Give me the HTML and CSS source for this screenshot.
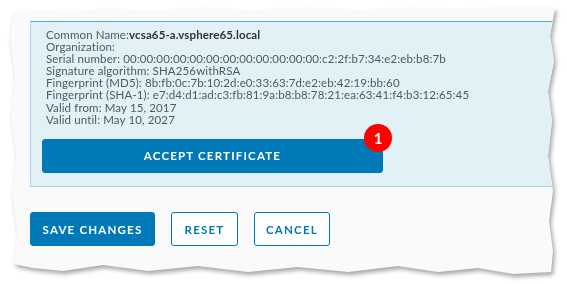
FILE: index.html
```html
<!DOCTYPE html>
<html lang="en">
<head>
  <meta charset="UTF-8">
  <title>Certificate</title>
  <link rel="stylesheet" href="styles.css">
</head>
<body>

<!-- Torn paper snippet -->
<div class="sheet">
  <div class="paper">

    <!-- Certificate info box -->
    <div class="cert-box">
      <div class="cert-info">
        <div>Common Name:<b>vcsa65-a.vsphere65.local</b></div>
        <div>Organization:</div>
        <div>Serial number: 00:00:00:00:00:00:00:00:00:00:00:00:c2:2f:b7:34:e2:eb:b8:7b</div>
        <div>Signature algorithm: SHA256withRSA</div>
        <div>Fingerprint (MD5): 8b:fb:0c:7b:10:2d:e0:33:63:7d:e2:eb:42:19:bb:60</div>
        <div>Fingerprint (SHA-1): e7:d4:d1:ad:c3:fb:81:9a:b8:b8:78:21:ea:63:41:f4:b3:12:65:45</div>
        <div>Valid from: May 15, 2017</div>
        <div>Valid until: May 10, 2027</div>
      </div>
      <button class="btn btn-primary accept-btn">
        ACCEPT CERTIFICATE
        <span class="badge">1</span>
      </button>
    </div>

    <!-- Footer buttons -->
    <div class="actions">
      <button class="btn btn-primary">SAVE CHANGES</button>
      <button class="btn btn-outline">RESET</button>
      <button class="btn btn-outline">CANCEL</button>
    </div>

  </div>
</div>

</body>
</html>
```

FILE: styles.css
```css
* {
  margin: 0;
  padding: 0;
  box-sizing: border-box;
}

body {
  background: #fff;
  font-family: Lato, "Open Sans", sans-serif;
}

/* Wrapper carries the shadow, paper carries the torn edge */
.sheet {
  padding: 6px 8px;
  filter: drop-shadow(2px 3px 2px rgba(0, 0, 0, 0.35));
}

.paper {
  width: 549px;
  height: 270px;
  background: #fafafa;
  padding: 15px 0 0 22px;
  clip-path: polygon(
    4px 8px, 30px 5px, 60px 7px, 95px 3px, 140px 6px, 190px 2px, 240px 5px,
    300px 2px, 350px 5px, 400px 2px, 450px 4px, 500px 1px, 547px 2px,
    542px 30px, 546px 55px, 540px 85px, 544px 115px, 540px 150px,
    545px 185px, 541px 215px, 545px 245px, 543px 266px,
    505px 268px, 470px 262px, 430px 266px, 390px 260px, 340px 266px,
    290px 261px, 240px 266px, 190px 260px, 140px 265px, 95px 259px,
    55px 265px, 25px 262px, 6px 258px,
    9px 225px, 4px 190px, 8px 150px, 3px 110px, 7px 70px, 2px 35px
  );
}

/* Certificate box */
.cert-box {
  background: #e1f1f6;
  border: 1px solid #a6d8ec;
  border-top: 1px solid #49afd9;
  border-right: none;
  height: 166px;
  padding: 7px 0 0 11px;
}

.cert-info {
  padding-left: 4px;
  font-size: 11.5px;
  line-height: 12.1px;
  letter-spacing: 0.12px;
  color: #4f5963;
  white-space: nowrap;
}

.cert-info b {
  color: #2f3338;
  font-weight: 700;
}

/* Buttons */
.btn {
  height: 34px;
  border-radius: 3px;
  font-family: Lato, "Open Sans", sans-serif;
  font-size: 11.5px;
  font-weight: 700;
  letter-spacing: 1.2px;
  cursor: pointer;
}

.btn-primary {
  background: #0079b8;
  border: 1px solid #0079b8;
  color: #fff;
}

.btn-outline {
  background: #fff;
  border: 1px solid #0079b8;
  color: #0079b8;
}

.accept-btn {
  position: relative;
  display: block;
  width: 341px;
  margin-top: 13px;
}

.badge {
  position: absolute;
  right: -10px;
  top: -16px;
  width: 28px;
  height: 28px;
  border-radius: 50%;
  background: #f00;
  color: #fff;
  font-size: 15px;
  font-weight: 700;
  letter-spacing: 0;
  line-height: 28px;
  text-align: center;
}

.actions {
  display: flex;
  gap: 16px;
  margin-top: 25px;
}

.actions .btn:nth-child(1) { width: 125px; }
.actions .btn:nth-child(2) { width: 67px; }
.actions .btn:nth-child(3) { width: 76px; }
```
